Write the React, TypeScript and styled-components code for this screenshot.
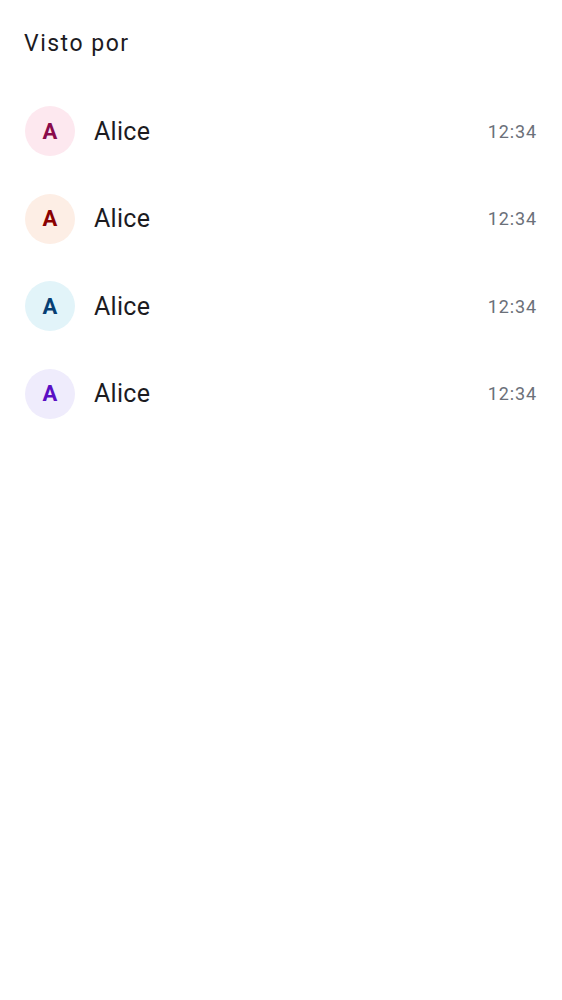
import React from "react";
import styled, { createGlobalStyle } from "styled-components";

const Global = createGlobalStyle`
  html, body { margin: 0; padding: 0; background: #ffffff; }
  body { font-family: Roboto, "Noto Sans", sans-serif; }
`;

const Page = styled.div`
  padding: 30px 25px 0 25px;
`;

const Title = styled.h2`
  margin: 0 0 0 -1px;
  font-size: 23px;
  line-height: 28px;
  font-weight: 400;
  color: #1c1b1f;
  letter-spacing: 1.5px;
`;

const List = styled.ul`
  list-style: none;
  margin: 29.25px 0 0 0;
  padding: 0;
`;

const Row = styled.li`
  display: flex;
  align-items: center;
  height: 87.5px;
`;

const Avatar = styled.div<{ $bg: string; $fg: string }>`
  width: 50px;
  height: 50px;
  border-radius: 50%;
  background: ${(p) => p.$bg};
  color: ${(p) => p.$fg};
  display: flex;
  align-items: center;
  justify-content: center;
  font-size: 22px;
  font-weight: 700;
  flex-shrink: 0;
`;

const Name = styled.span`
  flex: 1;
  margin-left: 19px;
  font-size: 25px;
  color: #1c1b1f;
  letter-spacing: 0.3px;
`;

const Time = styled.span`
  font-size: 18px;
  color: #6b7079;
  letter-spacing: 0.9px;
`;

const viewers = [
  { bg: "#fde8ef", fg: "#8a0b4b" },
  { bg: "#fdeee5", fg: "#8a0000" },
  { bg: "#e2f4f9", fg: "#073f74" },
  { bg: "#efecfc", fg: "#5a0fc4" },
];

export default function App() {
  return (
    <>
      <Global />
      <Page>
        <Title>Visto por</Title>
        <List>
          {viewers.map((v, i) => (
            <Row key={i}>
              <Avatar $bg={v.bg} $fg={v.fg}>A</Avatar>
              <Name>Alice</Name>
              <Time>12:34</Time>
            </Row>
          ))}
        </List>
      </Page>
    </>
  );
}
